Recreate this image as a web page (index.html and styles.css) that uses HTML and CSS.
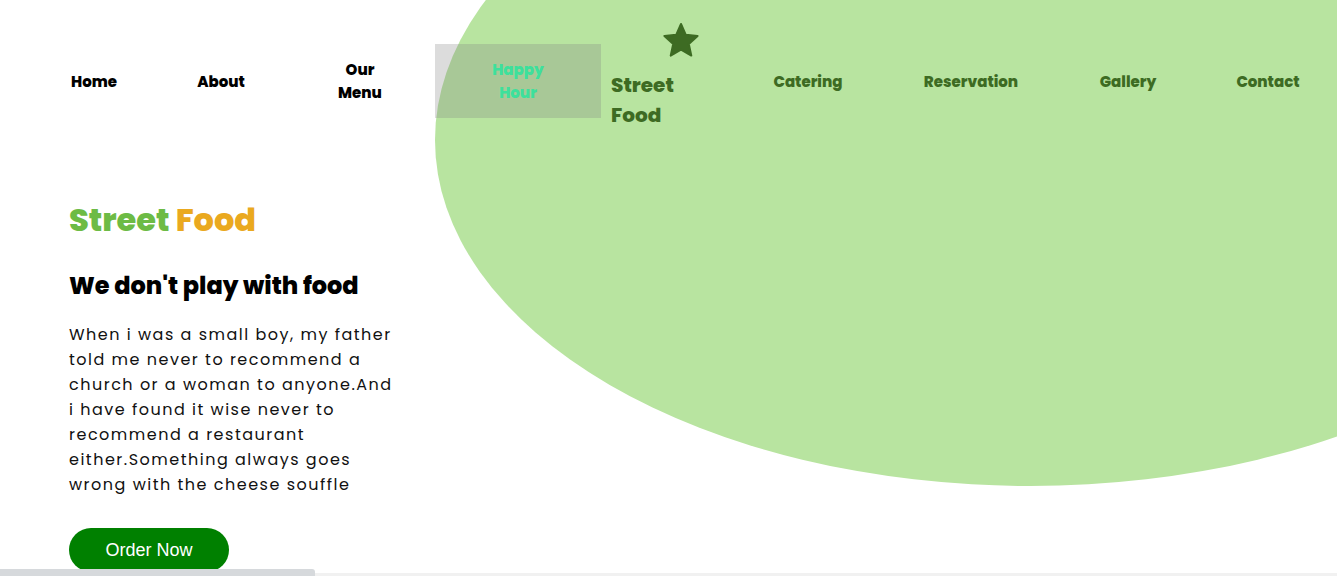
FILE: index.html
```html
<!DOCTYPE html>
<html lang="en">
<head>
<meta charset="utf-8">
<title>Street Food</title>
<link rel="stylesheet" href="styles.css">
</head>
<body>
<div class="page">
  <div class="blob"></div>
  <nav class="nav">
    <a class="nav-item w-home" href="#">Home</a>
    <a class="nav-item w-about" href="#">About</a>
    <a class="nav-item w-menu" href="#">Our Menu</a>
    <a class="nav-item happy" href="#"><span class="happy-label">Happy Hour</span></a>
    <div class="logo">
      <svg class="star" viewBox="0 0 36 36" width="36" height="36" aria-hidden="true">
        <path d="M18 2L22.8 12.8 34.6 14 25.8 22 28.3 33.6 18 27.7 7.7 33.6 10.2 22 1.4 14 13.2 12.8Z" fill="#3d6b23" stroke="#3d6b23" stroke-width="2" stroke-linejoin="round"/>
      </svg>
      <div class="logo-text">Street Food</div>
    </div>
    <a class="nav-item dark w-cater" href="#">Catering</a>
    <a class="nav-item dark w-reserv" href="#">Reservation</a>
    <a class="nav-item dark w-gallery" href="#">Gallery</a>
    <a class="nav-item dark w-contact" href="#">Contact</a>
  </nav>
  <section class="hero">
    <h1 class="title"><span class="green">Street</span> <span class="orange">Food</span></h1>
    <h2 class="subtitle">We don't play with food</h2>
    <p class="text">When i was a small boy, my father<br>told me never to recommend a<br>church or a woman to anyone.And<br>i have found it wise never to<br>recommend a restaurant<br>either.Something always goes<br>wrong with the cheese souffle</p>
    <button class="order">Order Now</button>
  </section>
  <div class="scrollbar"><div class="thumb"></div></div>
</div>
</body>
</html>
```
FILE: styles.css
```css
* { box-sizing: border-box; }
html, body { margin: 0; padding: 0; }
body {
  background: #fff;
  font-family: "Poppins", "Open Sans", "DejaVu Sans", sans-serif;
  color: #000;
  overflow: hidden;
}
.page {
  position: relative;
  width: 1337px;
  height: 576px;
  overflow: hidden;
}
.blob {
  position: absolute;
  left: 435px;
  top: -206px;
  width: 1190px;
  height: 692px;
  border-radius: 50%;
  background: #b8e4a0;
  z-index: 0;
}
.nav {
  position: relative;
  z-index: 1;
  display: flex;
  align-items: center;
  height: 118px;
  padding-top: 44px;
  padding-left: 30px;
}
.nav > * { flex-shrink: 0; }
.nav-item {
  display: flex;
  align-items: center;
  justify-content: center;
  text-align: center;
  text-decoration: none;
  color: #000;
  font-weight: 800;
  font-size: 15px;
  line-height: 23px;
}
.w-home { width: 128px; }
.w-about { width: 126px; }
.w-menu { width: 62px; margin: 0 44px 0 45px; }
.happy {
  width: 166px;
  height: 74px;
  background: rgba(128, 128, 128, 0.28);
  color: #3de09c;
}
.happy-label { width: 60px; }
.logo {
  align-self: flex-start;
  margin-top: -22px;
  margin-left: 10px;
  width: 110px;
  display: flex;
  flex-direction: column;
}
.star { display: block; margin-left: 52px; }
.logo-text {
  color: #3d6b23;
  font-weight: 800;
  font-size: 20px;
  line-height: 30px;
  width: 80px;
  margin-top: 12px;
}
.dark { color: #3d6b23; }
.w-cater { width: 134px; margin-left: 20px; }
.w-reserv { width: 192px; }
.w-gallery { width: 122px; }
.w-contact { width: 158px; }
.hero {
  position: relative;
  z-index: 1;
  padding-left: 69px;
  padding-top: 78px;
}
.title {
  margin: 0;
  font-size: 32px;
  font-weight: 800;
  line-height: 48px;
}
.green { color: #6dbb45; }
.orange { color: #eaa91f; }
.subtitle {
  margin: 25px 0 0;
  font-size: 24px;
  font-weight: 800;
  line-height: 34px;
}
.text {
  margin: 19px 0 0;
  font-size: 16px;
  font-weight: 400;
  line-height: 25px;
  letter-spacing: 1.5px;
  color: #111;
}
.order {
  margin-top: 31px;
  width: 160px;
  height: 44px;
  border: none;
  border-radius: 22px;
  background: #008000;
  color: #fff;
  font-family: "Liberation Sans", Arial, sans-serif;
  font-size: 18px;
  padding: 0;
}
.scrollbar {
  position: absolute;
  left: 0;
  right: 0;
  bottom: 0;
  height: 3px;
  background: #f1f1f1;
  z-index: 5;
}
.thumb {
  position: absolute;
  left: 0;
  bottom: 0;
  width: 315px;
  height: 7px;
  background: #d6d9dc;
  border-top-right-radius: 3px;
}
```
